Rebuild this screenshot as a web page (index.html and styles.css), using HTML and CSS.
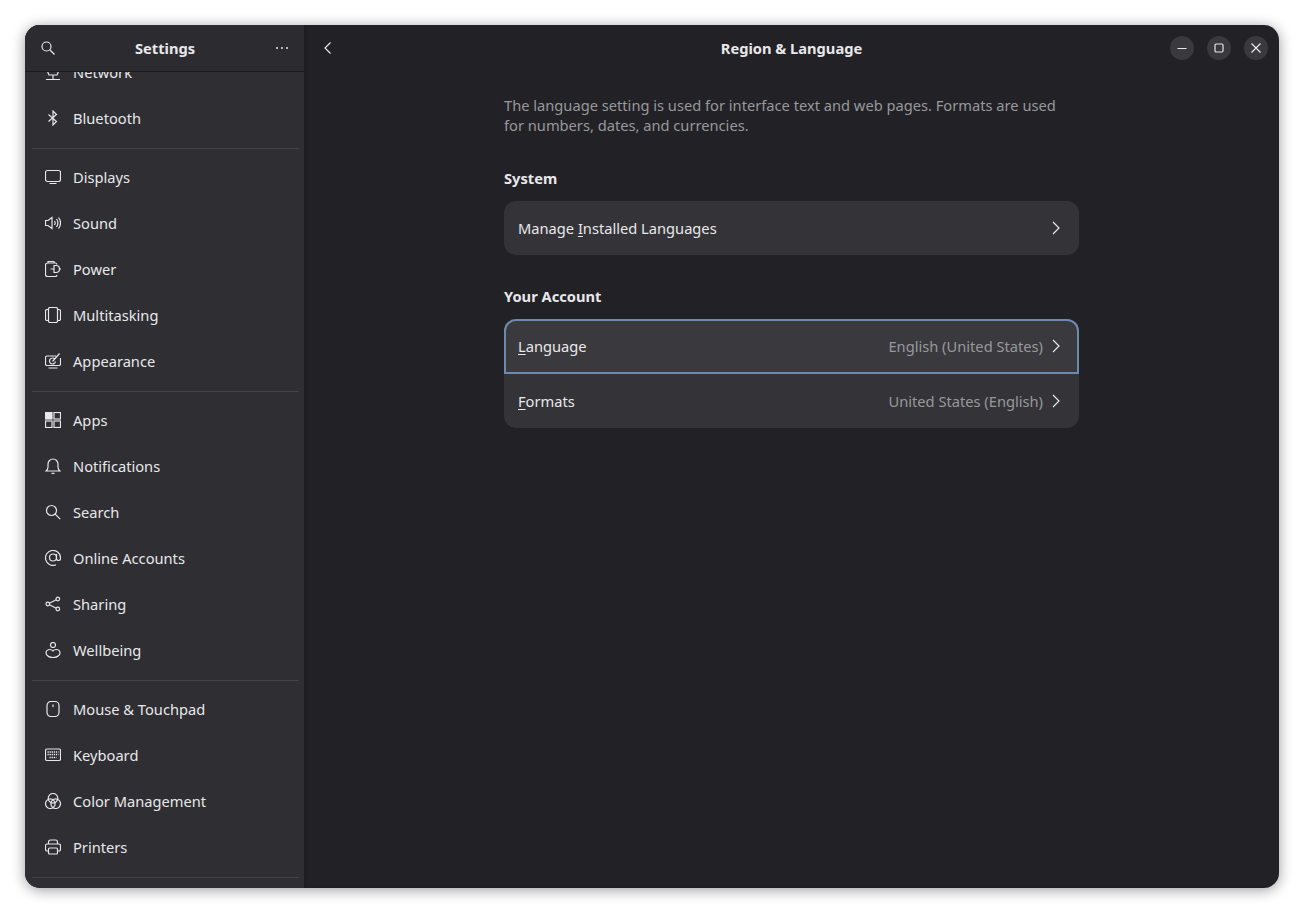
FILE: index.html
```html
<!DOCTYPE html>
<html lang="en">
<head>
    <meta charset="UTF-8">
    <title>Settings - Region &amp; Language</title>
    <link rel="stylesheet" href="styles.css">
</head>
<body>
    <div class="window">
        <!-- sidebar -->
        <aside class="sidebar">
            <header class="side-header">
                <button class="flat-btn">
                    <svg class="icon" viewBox="0 0 16 16"><circle cx="6.500" cy="6.500" r="4.500"/><path d="M10 10l4.500 4.500"/></svg>
                </button>
                <div class="side-title">Settings</div>
                <button class="flat-btn">
                    <svg class="icon" viewBox="0 0 16 16"><circle class="solid" cx="3" cy="8" r="1"/><circle class="solid" cx="8" cy="8" r="1"/><circle class="solid" cx="13" cy="8" r="1"/></svg>
                </button>
            </header>
            <nav class="side-scroll">
                <div class="side-list">
                    <div class="side-row">
                        <svg class="icon" viewBox="0 0 16 16"><path d="M2.500 7.500l1.500 3.500h8l1.500-3.500M8 11v4.500M1 15.500h14"/></svg>
                        <span>Network</span>
                    </div>
                    <div class="side-row">
                        <svg class="icon" viewBox="0 0 16 16"><path d="M3.500 4.500l8 7L8 15V1l3.500 3.500-8 7"/></svg>
                        <span>Bluetooth</span>
                    </div>
                    <div class="side-sep"></div>
                    <div class="side-row">
                        <svg class="icon" viewBox="0 0 16 16"><rect x="0.500" y="1.500" width="15" height="11" rx="2"/><path d="M4.500 14.500h7"/></svg>
                        <span>Displays</span>
                    </div>
                    <div class="side-row">
                        <svg class="icon" viewBox="0 0 16 16"><path d="M0.500 5.500h2.500L7 2.500v11l-4-3H0.500zM9.500 6c.8 1.200.8 2.800 0 4M11.500 4c1.700 2.400 1.700 5.600 0 8M13.500 2.500c2.500 3.300 2.500 7.700 0 11"/></svg>
                        <span>Sound</span>
                    </div>
                    <div class="side-row">
                        <svg class="icon" viewBox="0 0 16 16"><path d="M3 2V.500h6V2M12 3.500A2 2 0 0 0 10.500 2H2.500a2 2 0 0 0-2 2v9.500a2 2 0 0 0 2 2h8a2 2 0 0 0 1.500-1.500"/><path d="M9 4.500h2a3.500 3.500 0 0 1 0 7H9zM5.500 8H9M14.500 8H16"/></svg>
                        <span>Power</span>
                    </div>
                    <div class="side-row">
                        <svg class="icon" viewBox="0 0 16 16"><rect x="3.500" y="0.500" width="9" height="15" rx="1.500"/><path d="M3.500 2.500H2A1.500 1.500 0 0 0 .5 4v8A1.500 1.500 0 0 0 2 13.500h1.500M12.500 2.500H14A1.500 1.500 0 0 1 15.500 4v8a1.500 1.500 0 0 1-1.500 1.500h-1.500"/></svg>
                        <span>Multitasking</span>
                    </div>
                    <div class="side-row">
                        <svg class="icon" viewBox="0 0 16 16"><path d="M11 3H2A1.500 1.500 0 0 0 .5 4.500V11A1.500 1.500 0 0 0 2 12.500h12a1.500 1.500 0 0 0 1.500-1.500V5M3.500 15h9"/><path d="M9.800 6A3 3 0 1 0 10.500 8.500M7.500 8.500L14.500 .5"/></svg>
                        <span>Appearance</span>
                    </div>
                    <div class="side-sep"></div>
                    <div class="side-row">
                        <svg class="icon" viewBox="0 0 16 16"><rect class="solid" x="0.500" y="0.500" width="6.500" height="6.500"/><rect x="9" y="0.500" width="6.500" height="6.500"/><rect x="0.500" y="9" width="6.500" height="6.500"/><rect x="9" y="9" width="6.500" height="6.500"/></svg>
                        <span>Apps</span>
                    </div>
                    <div class="side-row">
                        <svg class="icon" viewBox="0 0 16 16"><path d="M1 13h14c-1.500-1-2-2-2-4V6a5 5 0 0 0-10 0v3c0 2-.5 3-2 4zM6.500 15.300h3"/></svg>
                        <span>Notifications</span>
                    </div>
                    <div class="side-row">
                        <svg class="icon" viewBox="0 0 16 16"><circle cx="6.500" cy="6.500" r="5"/><path d="M10.200 10.200l5 5"/></svg>
                        <span>Search</span>
                    </div>
                    <div class="side-row">
                        <svg class="icon" viewBox="0 0 16 16"><circle cx="8" cy="7.500" r="3.500"/><path d="M11.500 4v4.500a2 2 0 0 0 4 0V8A7.500 7.500 0 1 0 11 14.800"/></svg>
                        <span>Online Accounts</span>
                    </div>
                    <div class="side-row">
                        <svg class="icon" viewBox="0 0 16 16"><circle cx="2.800" cy="8" r="1.800"/><circle cx="12.800" cy="3" r="1.800"/><circle cx="12.800" cy="13" r="1.800"/><path d="M4.400 7.200l6.800-3.400M4.400 8.800l6.800 3.400"/></svg>
                        <span>Sharing</span>
                    </div>
                    <div class="side-row">
                        <svg class="icon" viewBox="0 0 16 16"><circle cx="8" cy="3" r="2.500"/><path d="M8 15.500c-3 0-7-1.500-7-4.500 0-2 1.800-3.500 3.800-3.500 1.400 0 2.400.5 3.200 1.500.8-1 1.800-1.500 3.200-1.500 2 0 3.800 1.500 3.800 3.500 0 3-4 4.500-7 4.500z"/></svg>
                        <span>Wellbeing</span>
                    </div>
                    <div class="side-sep"></div>
                    <div class="side-row">
                        <svg class="icon" viewBox="0 0 16 16"><rect x="2" y="0.500" width="12" height="15" rx="4"/><path d="M8 3.500v2.500"/></svg>
                        <span>Mouse &amp; Touchpad</span>
                    </div>
                    <div class="side-row">
                        <svg class="icon" viewBox="0 0 16 16"><rect x="0.500" y="2" width="15" height="11.500" rx="1.500"/><path class="dots" d="M2.500 5h11M2.500 7.500h11M4.500 10.500h7"/></svg>
                        <span>Keyboard</span>
                    </div>
                    <div class="side-row">
                        <svg class="icon" viewBox="0 0 16 16"><circle cx="8" cy="5.300" r="4.800"/><circle cx="5.300" cy="10.700" r="4.800"/><circle cx="10.700" cy="10.700" r="4.800"/></svg>
                        <span>Color Management</span>
                    </div>
                    <div class="side-row">
                        <svg class="icon" viewBox="0 0 16 16"><path d="M3.500 5V3a2 2 0 0 1 2-2h5a2 2 0 0 1 2 2v2M3.500 12H2a1.500 1.500 0 0 1-1.500-1.500V6.500A1.500 1.500 0 0 1 2 5h12a1.500 1.500 0 0 1 1.500 1.500v4A1.500 1.500 0 0 1 14 12h-1.500"/><rect x="3.500" y="9" width="9" height="6" rx="1"/></svg>
                        <span>Printers</span>
                    </div>
                    <div class="side-sep"></div>
                </div>
            </nav>
        </aside>

        <!-- main page -->
        <main class="content">
            <header class="top-bar">
                <button class="flat-btn back-btn">
                    <svg class="icon" viewBox="0 0 16 16"><path d="M10.500 2.500L5 8l5.500 5.500"/></svg>
                </button>
                <div class="top-title">Region &amp; Language</div>
                <div class="win-btns">
                    <button class="win-btn">
                        <svg class="icon-small" viewBox="0 0 10 10"><path d="M.5 5.500h9"/></svg>
                    </button>
                    <button class="win-btn">
                        <svg class="icon-small" viewBox="0 0 10 10"><rect x="1" y="1" width="8" height="8" rx="1.200"/></svg>
                    </button>
                    <button class="win-btn">
                        <svg class="icon-small" viewBox="0 0 10 10"><path d="M.5.500l9 9M9.500.500l-9 9"/></svg>
                    </button>
                </div>
            </header>

            <div class="page">
                <p class="intro">The language setting is used for interface text and web pages. Formats are used for numbers, dates, and currencies.</p>

                <h2 class="group-title">System</h2>
                <div class="card">
                    <div class="card-row">
                        <span class="row-label">Manage <u>I</u>nstalled Languages</span>
                        <svg class="icon chevron" viewBox="0 0 16 16"><path d="M5 2l6 6-6 6"/></svg>
                    </div>
                </div>

                <h2 class="group-title second">Your Account</h2>
                <div class="card">
                    <div class="card-row focused">
                        <span class="row-label"><u>L</u>anguage</span>
                        <span class="row-value">English (United States)</span>
                        <svg class="icon chevron" viewBox="0 0 16 16"><path d="M5 2l6 6-6 6"/></svg>
                    </div>
                    <div class="card-row">
                        <span class="row-label"><u>F</u>ormats</span>
                        <span class="row-value">United States (English)</span>
                        <svg class="icon chevron" viewBox="0 0 16 16"><path d="M5 2l6 6-6 6"/></svg>
                    </div>
                </div>
            </div>
        </main>
    </div>
</body>
</html>
```

FILE: styles.css
```css
:root {
    --side-bg: #2e2e33;
    --main-bg: #222226;
    --card-bg: #343438;
    --text: #e8e8ea;
    --muted: #98989c;
    --line: #434347;
    --focus: #6f88ad;
}

* {
    margin: 0;
    padding: 0;
    box-sizing: border-box;
}

body {
    background-color: #ffffff;
    color: var(--text);
    font-family: 'Noto Sans', sans-serif;
    font-size: 14.67px;
    line-height: 20px;
    padding: 25px;
    height: 913px;
    overflow: hidden;
}

button {
    border: none;
    background: none;
    color: inherit;
}

.window {
    display: flex;
    height: 863px;
    border-radius: 15px;
    overflow: hidden;
    background: var(--main-bg);
    box-shadow: 0 2px 14px rgba(0, 0, 0, 0.4);
}

.icon {
    display: block;
    flex: none;
    width: 16px;
    height: 16px;
    fill: none;
    stroke: currentColor;
    stroke-width: 1.2;
}

.icon .solid {
    fill: currentColor;
    stroke: none;
}

.icon rect.solid {
    stroke: currentColor;
}

.icon .dots {
    stroke-dasharray: 1.300 0.800;
    stroke-width: 1.500;
}

.icon-small {
    display: block;
    width: 10px;
    height: 10px;
    fill: none;
    stroke: currentColor;
    stroke-width: 1.200;
}

/* sidebar */
.sidebar {
    display: flex;
    flex-direction: column;
    flex: none;
    width: 279px;
    background: var(--side-bg);
}

.side-header {
    display: flex;
    align-items: center;
    justify-content: space-between;
    flex: none;
    height: 47px;
    padding: 0 14px 0 15px;
    border-bottom: 1px solid #1c1c1f;
    background: #2c2c30;
}

.side-title,
.top-title {
    font-weight: 700;
}

.flat-btn {
    display: block;
}

.side-scroll {
    flex: 1;
    overflow: hidden;
}

.side-list {
    margin-top: -23px;
    padding: 0 5px 0 7px;
}

.side-row {
    display: flex;
    align-items: center;
    gap: 12px;
    height: 46px;
    padding-left: 13px;
}

.side-sep {
    height: 1px;
    margin: 7px 0 5px;
    background: var(--line);
}

/* main page */
.content {
    flex: 1;
    min-width: 0;
    box-shadow: inset 2px 0 3px rgba(0, 0, 0, 0.12);
}

.top-bar {
    display: grid;
    grid-template-columns: 1fr auto 1fr;
    align-items: center;
    height: 46px;
    padding: 0 11px;
}

.back-btn {
    justify-self: start;
    margin-left: 5px;
}

.top-title {
    text-align: center;
}

.win-btns {
    display: flex;
    justify-content: flex-end;
    gap: 13px;
}

.win-btn {
    display: flex;
    align-items: center;
    justify-content: center;
    width: 24px;
    height: 24px;
    border-radius: 50%;
    background: #3a3a3e;
}

.page {
    width: 575px;
    margin: 0 auto;
    padding-top: 24px;
}

.intro {
    color: var(--muted);
}

.group-title {
    font-size: 14.67px;
    font-weight: 700;
    line-height: 20px;
    margin-top: 33px;
    margin-bottom: 13px;
}

.group-title.second {
    margin-top: 31px;
}

.card {
    background: var(--card-bg);
    border-radius: 12px;
}

.card-row {
    display: flex;
    align-items: center;
    height: 54px;
    padding: 0 15px 0 14px;
}

.card-row.focused {
    height: 55px;
    padding-bottom: 1px;
    background: #3a3a3e;
    border-radius: 12px 12px 0 0;
    box-shadow: inset 0 0 0 2px var(--focus);
}

.row-label {
    flex: 1;
}

.row-label u {
    text-underline-offset: 2px;
    text-decoration-thickness: 1px;
}

.row-value {
    color: var(--muted);
    margin-right: 5px;
}
```
